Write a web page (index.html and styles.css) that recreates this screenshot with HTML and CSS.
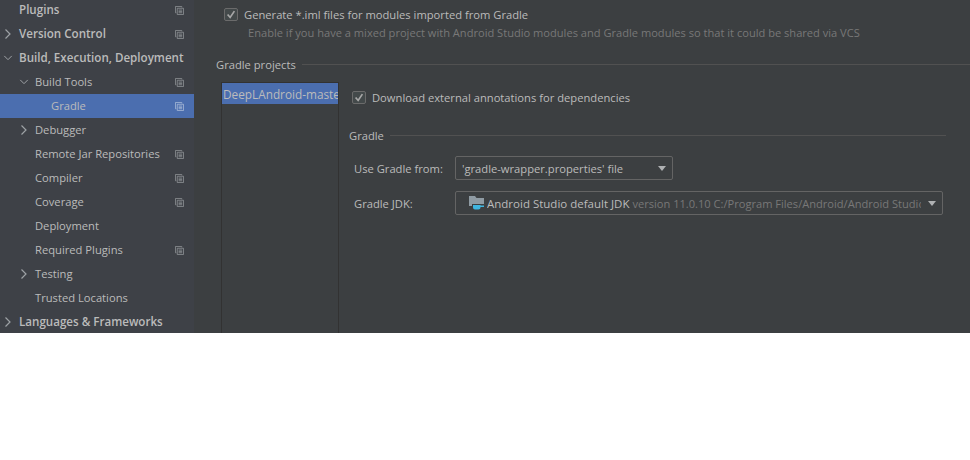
FILE: index.html
```html
<!DOCTYPE html>
<html lang="en">
<head>
<meta charset="utf-8">
<title>Gradle settings</title>
<link rel="stylesheet" href="styles.css">
</head>
<body>
<svg class="defs" width="0" height="0" aria-hidden="true">
  <symbol id="copy" viewBox="0 0 10 10">
    <path d="M7.500 1.500V.5H.5v7h1" fill="none" stroke="currentColor" stroke-width=".9"/>
    <path d="M2.500 2.500h7v7h-7zM4 4.500h4M4 6h4M4 7.500h4" fill="none" stroke="currentColor" stroke-width=".9"/>
  </symbol>
  <symbol id="right" viewBox="0 0 10 12"><path d="M2.500 1.500L7 6l-4.500 4.500" fill="none" stroke="currentColor" stroke-width="1.200"/></symbol>
  <symbol id="down" viewBox="0 0 12 10"><path d="M1.500 2.500L6 7l4.500-4.500" fill="none" stroke="currentColor" stroke-width="1.200"/></symbol>
  <symbol id="tick" viewBox="0 0 14 13"><path d="M3 6.500L6 10l5-7.500" fill="none" stroke="currentColor" stroke-width="2"/></symbol>
</svg>
<div class="app">
  <nav class="sidebar">
    <div class="row top"><span class="arrow"></span><span class="label">Plugins</span><svg class="copy"><use href="#copy"/></svg></div>
    <div class="row top"><svg class="arrow"><use href="#right"/></svg><span class="label">Version Control</span><svg class="copy"><use href="#copy"/></svg></div>
    <div class="row top"><svg class="arrow"><use href="#down"/></svg><span class="label">Build, Execution, Deployment</span></div>
    <div class="row sub"><svg class="arrow"><use href="#down"/></svg><span class="label">Build Tools</span><svg class="copy"><use href="#copy"/></svg></div>
    <div class="row leaf selected"><span class="label">Gradle</span><svg class="copy"><use href="#copy"/></svg></div>
    <div class="row sub"><svg class="arrow"><use href="#right"/></svg><span class="label">Debugger</span></div>
    <div class="row sub"><span class="arrow"></span><span class="label">Remote Jar Repositories</span><svg class="copy"><use href="#copy"/></svg></div>
    <div class="row sub"><span class="arrow"></span><span class="label">Compiler</span><svg class="copy"><use href="#copy"/></svg></div>
    <div class="row sub"><span class="arrow"></span><span class="label">Coverage</span><svg class="copy"><use href="#copy"/></svg></div>
    <div class="row sub"><span class="arrow"></span><span class="label">Deployment</span></div>
    <div class="row sub"><span class="arrow"></span><span class="label">Required Plugins</span><svg class="copy"><use href="#copy"/></svg></div>
    <div class="row sub"><svg class="arrow"><use href="#right"/></svg><span class="label">Testing</span></div>
    <div class="row sub"><span class="arrow"></span><span class="label">Trusted Locations</span></div>
    <div class="row top"><svg class="arrow"><use href="#right"/></svg><span class="label">Languages &amp; Frameworks</span></div>
  </nav>
  <main class="content">
    <div class="check-line first">
      <span class="checkbox"><svg class="tick"><use href="#tick"/></svg></span>
      <span>Generate *.iml files for modules imported from Gradle</span>
    </div>
    <p class="hint">Enable if you have a mixed project with Android Studio modules and Gradle modules so that it could be shared via VCS</p>
    <div class="group-title projects"><span>Gradle projects</span><i class="rule"></i></div>
    <div class="split">
      <div class="project-list"><div class="project selected">DeepLAndroid-master</div></div>
      <div class="details">
        <div class="check-line">
          <span class="checkbox"><svg class="tick"><use href="#tick"/></svg></span>
          <span>Download external annotations for dependencies</span>
        </div>
        <div class="group-title gradle"><span>Gradle</span><i class="rule"></i></div>
        <div class="form-row from">
          <span class="form-label">Use Gradle from:</span>
          <div class="combo short"><span class="combo-text">'gradle-wrapper.properties' file</span><i class="caret"></i></div>
        </div>
        <div class="form-row">
          <span class="form-label">Gradle JDK:</span>
          <div class="combo wide">
            <svg class="jdk" viewBox="0 0 15 14">
              <path d="M0 0h6l1.500 2H15v8H0z" fill="#8f9ba3"/>
              <path d="M3 8h12v6H3z" fill="#3c3f41"/>
              <path d="M4 9h7.500v2.500q0 2-2 2H6q-2 0-2-2zM11.500 9.500H15v1.500h-3.500z" fill="#40b6e0"/>
            </svg>
            <span class="combo-text clip"><b>Android Studio default JDK</b> <em>version 11.0.10 C:/Program Files/Android/Android Studio/jre</em></span>
            <i class="caret"></i>
          </div>
        </div>
      </div>
    </div>
  </main>
</div>
</body>
</html>
```
FILE: styles.css
```css
html, body { margin: 0; padding: 0; background: #fff; }
body { font-family: "Open Sans", "Noto Sans", sans-serif; font-size: 11.2px; color: #bbbbbb; }
.defs { display: block; height: 0; }
.app { display: flex; width: 970px; height: 333px; overflow: hidden; background: #3c3f41; }

.sidebar { flex: 0 0 194px; margin-top: -2px; background: #3e4147; }
.row { display: flex; align-items: center; height: 24px; }
.row.top .label { font-weight: 600; font-size: 11.600px; }
.row .arrow { flex: 0 0 10px; width: 10px; height: 12px; color: #9ea2a6; }
.row.top .arrow { margin-left: 3px; margin-right: 6px; }
.row.sub .arrow { margin-left: 19px; margin-right: 6px; }
.row.leaf { padding-left: 51px; }
.row.selected { background: #4b6eaf; }
.label { flex: 1; margin-bottom: 2px; white-space: nowrap; }
.copy { flex: 0 0 9px; width: 9px; height: 9px; margin-right: 10px; color: #8f9397; }
.selected .copy { color: #a9bbd8; }

.content { flex: 1; min-width: 0; }
.check-line { display: flex; align-items: center; gap: 6px; height: 16px; }
.check-line.first { margin: 6px 0 0 30px; }
.checkbox { display: flex; flex: 0 0 14px; box-sizing: border-box; width: 14px; height: 13px; border: 1px solid #6b6b6b; border-radius: 2px; background: #43494a; color: #a7a7a7; }
.tick { width: 12px; height: 11px; }
.hint { margin: 3px 0 0 54px; height: 16px; line-height: 16px; font-size: 11.100px; color: #787878; white-space: nowrap; }

.group-title { display: flex; align-items: center; gap: 6px; height: 16px; }
.group-title .rule { flex: 1; height: 1px; background: #515151; }
.projects { margin: 15px 0 0 22px; }
.split { display: flex; margin: 10px 0 0 27px; height: 300px; }
.project-list { box-sizing: border-box; flex: 0 0 118px; width: 118px; border: 1px solid #323232; border-bottom: 0; overflow: hidden; }
.project { height: 21px; line-height: 23px; padding-left: 1px; font-size: 11.800px; white-space: nowrap; overflow: hidden; }
.project.selected { background: #4b6eaf; }

.details { flex: 1; min-width: 0; padding: 0 24px 0 10px; }
.details .check-line { margin: 7px 0 0 3px; }
.gradle { margin-top: 22px; }
.form-row { display: flex; align-items: center; height: 24px; padding-left: 5px; margin-top: 11px; }
.form-row.from { margin-top: 13px; }
.form-label { flex: 0 0 101px; }
.combo { box-sizing: border-box; display: flex; flex: 0 0 auto; align-items: center; height: 24px; border: 1px solid #646464; border-radius: 2px; padding: 0 6px 0 6px; }
.short { width: 218px; }
.wide { width: 488px; padding-left: 13px; }
.combo-text { flex: 1; min-width: 0; white-space: nowrap; }
.clip { overflow: hidden; }
.clip b { font-weight: 400; font-size: 11.500px; }
.clip em { font-style: normal; font-size: 11.100px; color: #787878; }
.caret { flex: 0 0 auto; width: 0; height: 0; margin-left: 7px; border-left: 4.500px solid transparent; border-right: 4.500px solid transparent; border-top: 5px solid #afb1b3; }
.jdk { flex: 0 0 15px; width: 15px; height: 14px; margin-right: 3px; }
```
